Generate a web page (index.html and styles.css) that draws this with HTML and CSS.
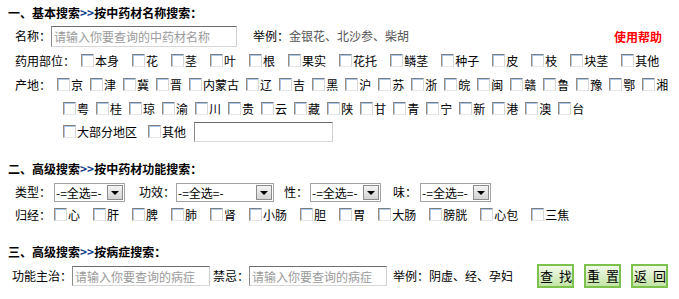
FILE: index.html
```html
<!DOCTYPE html>
<html lang="zh">
<head>
    <meta charset="UTF-8">
    <title>中药材搜索</title>
    <link rel="stylesheet" href="styles.css">
</head>
<body>
    <form class="search-page" action="#">
        <!-- 一、基本搜索 -->
        <h2 class="sec sec-first">一、基本搜索<span class="arr">&gt;&gt;</span>按中药材名称搜索：</h2>
        <div class="row row-name">
            <span class="lbl">名称：</span>
            <input type="text" class="txt txt-name" placeholder="请输入你要查询的中药材名称">
            <span class="eg">举例：<span class="eg-val">金银花、北沙参、柴胡</span></span>
            <a class="help" href="#">使用帮助</a>
        </div>
        <div class="row row-part">
            <span class="lbl">药用部位：</span>
            <div class="opts opts-wide">
                <label class="ck"><input type="checkbox">本身</label>
                <label class="ck"><input type="checkbox">花</label>
                <label class="ck"><input type="checkbox">茎</label>
                <label class="ck"><input type="checkbox">叶</label>
                <label class="ck"><input type="checkbox">根</label>
                <label class="ck"><input type="checkbox">果实</label>
                <label class="ck"><input type="checkbox">花托</label>
                <label class="ck"><input type="checkbox">鳞茎</label>
                <label class="ck"><input type="checkbox">种子</label>
                <label class="ck"><input type="checkbox">皮</label>
                <label class="ck"><input type="checkbox">枝</label>
                <label class="ck"><input type="checkbox">块茎</label>
                <label class="ck"><input type="checkbox">其他</label>
            </div>
        </div>
        <div class="row row-area">
            <span class="lbl">产地：</span>
            <div class="opts opts-tight">
                <label class="ck"><input type="checkbox">京</label>
                <label class="ck"><input type="checkbox">津</label>
                <label class="ck"><input type="checkbox">冀</label>
                <label class="ck"><input type="checkbox">晋</label>
                <label class="ck"><input type="checkbox">内蒙古</label>
                <label class="ck"><input type="checkbox">辽</label>
                <label class="ck"><input type="checkbox">吉</label>
                <label class="ck"><input type="checkbox">黑</label>
                <label class="ck"><input type="checkbox">沪</label>
                <label class="ck"><input type="checkbox">苏</label>
                <label class="ck"><input type="checkbox">浙</label>
                <label class="ck"><input type="checkbox">皖</label>
                <label class="ck"><input type="checkbox">闽</label>
                <label class="ck"><input type="checkbox">赣</label>
                <label class="ck"><input type="checkbox">鲁</label>
                <label class="ck"><input type="checkbox">豫</label>
                <label class="ck"><input type="checkbox">鄂</label>
                <label class="ck"><input type="checkbox">湘</label>
            </div>
        </div>
        <div class="row row-area row-more">
            <div class="opts opts-tight">
                <label class="ck"><input type="checkbox">粤</label>
                <label class="ck"><input type="checkbox">桂</label>
                <label class="ck"><input type="checkbox">琼</label>
                <label class="ck"><input type="checkbox">渝</label>
                <label class="ck"><input type="checkbox">川</label>
                <label class="ck"><input type="checkbox">贵</label>
                <label class="ck"><input type="checkbox">云</label>
                <label class="ck"><input type="checkbox">藏</label>
                <label class="ck"><input type="checkbox">陕</label>
                <label class="ck"><input type="checkbox">甘</label>
                <label class="ck"><input type="checkbox">青</label>
                <label class="ck"><input type="checkbox">宁</label>
                <label class="ck"><input type="checkbox">新</label>
                <label class="ck"><input type="checkbox">港</label>
                <label class="ck"><input type="checkbox">澳</label>
                <label class="ck"><input type="checkbox">台</label>
            </div>
        </div>
        <div class="row row-area row-more row-last">
            <div class="opts">
                <label class="ck ck-big"><input type="checkbox">大部分地区</label>
                <label class="ck ck-other"><input type="checkbox">其他</label>
                <input type="text" class="txt txt-other">
            </div>
        </div>

        <!-- 二、高级搜索 按功能 -->
        <h2 class="sec sec-mid">二、高级搜索<span class="arr">&gt;&gt;</span>按中药材功能搜索：</h2>
        <div class="row row-func">
            <span class="lbl">类型：</span>
            <span class="sel sel-type"><select><option>-=全选=-</option></select><span class="sel-btn"></span></span>
            <span class="lbl lbl-eff">功效：</span>
            <span class="sel sel-eff"><select><option>-=全选=-</option></select><span class="sel-btn"></span></span>
            <span class="lbl lbl-nat">性：</span>
            <span class="sel sel-nat"><select><option>-=全选=-</option></select><span class="sel-btn"></span></span>
            <span class="lbl lbl-taste">味：</span>
            <span class="sel sel-taste"><select><option>-=全选=-</option></select><span class="sel-btn"></span></span>
        </div>
        <div class="row row-mer">
            <span class="lbl">归经：</span>
            <div class="opts opts-wide">
                <label class="ck"><input type="checkbox">心</label>
                <label class="ck"><input type="checkbox">肝</label>
                <label class="ck"><input type="checkbox">脾</label>
                <label class="ck"><input type="checkbox">肺</label>
                <label class="ck"><input type="checkbox">肾</label>
                <label class="ck"><input type="checkbox">小肠</label>
                <label class="ck"><input type="checkbox">胆</label>
                <label class="ck"><input type="checkbox">胃</label>
                <label class="ck"><input type="checkbox">大肠</label>
                <label class="ck"><input type="checkbox">膀胱</label>
                <label class="ck"><input type="checkbox">心包</label>
                <label class="ck"><input type="checkbox">三焦</label>
            </div>
        </div>

        <!-- 三、高级搜索 按病症 -->
        <h2 class="sec sec-mid">三、高级搜索<span class="arr">&gt;&gt;</span>按病症搜索：</h2>
        <div class="row row-ill">
            <span class="lbl">功能主治：</span>
            <input type="text" class="txt txt-ill" placeholder="请输入你要查询的病症">
            <span class="lbl lbl-ban">禁忌：</span>
            <input type="text" class="txt txt-ill" placeholder="请输入你要查询的病症">
            <span class="eg eg-ill">举例：阴虚、经、孕妇</span>
            <div class="btns">
                <button type="submit" class="btn">查 找</button>
                <button type="reset" class="btn">重 置</button>
                <button type="button" class="btn">返 回</button>
            </div>
        </div>
    </form>
</body>
</html>
```

FILE: styles.css
```css
/* 基础样式 */
* {
    margin: 0;
    padding: 0;
    box-sizing: border-box;
}

body {
    font-family: "Noto Sans CJK SC", "Liberation Sans", sans-serif;
    font-size: 12px;
    color: #000;
    background: #fff;
}

.search-page {
    padding: 4px 0 0 8px;
}

/* 标题 */
.sec {
    font-size: 12px;
    font-weight: bold;
    height: 18px;
    line-height: 18px;
}

.sec .arr {
    color: #0d3b8e;
}

.sec-mid {
    margin-top: 17px;
}

/* 行 */
.row {
    display: flex;
    align-items: center;
    height: 24px;
    padding-left: 7px;
    white-space: nowrap;
}

.lbl {
    line-height: 14px;
}

.row-name {
    height: 22px;
    margin-top: 3px;
}

.row-part {
    margin-top: 2px;
}

.row-part .opts {
    margin-left: 6px;
}

.row-area .opts {
    margin-left: 6px;
}

.row-more {
    padding-left: 49px;
}

.row-last {
    height: 22px;
}

.row-func {
    height: 22px;
    margin-top: 3px;
}

.row-mer {
    height: 22px;
    margin-top: 1px;
}

.row-mer .opts {
    margin-left: 3px;
}

.row-ill {
    padding-left: 4px;
    margin-top: 3px;
}

/* 复选框 */
.opts {
    display: flex;
    align-items: center;
}

.ck {
    display: inline-flex;
    align-items: center;
    line-height: 14px;
}

.opts-wide .ck {
    margin-right: 13px;
}

.opts-tight .ck {
    margin-right: 7px;
}

.ck-big {
    margin-right: 11px;
}

.ck-other {
    margin-right: 8px;
}

.ck input {
    appearance: none;
    -webkit-appearance: none;
    width: 13px;
    height: 13px;
    margin: -2px 1px 0 0;
    background: #fff;
    border-top: 1px solid #7e7e7e;
    border-left: 1px solid #a38b74;
    border-right: 1px solid #d8d8d8;
    border-bottom: 1px solid #e6e6e6;
    box-shadow: inset 1px 1px 0 #a9c9ec;
}

/* 文本框 */
.txt {
    font: inherit;
    font-size: 12px;
    height: 21px;
    padding: 0 2px;
    border-top: 1px solid #6e6e6e;
    border-left: 1px solid #8a8a8a;
    border-right: 1px solid #d0d0d0;
    border-bottom: 1px solid #d6d6d6;
    outline: none;
    background: #fff;
}

.txt::placeholder {
    color: #9a9a9a;
}

.txt-name {
    width: 186px;
}

.txt-other {
    width: 139px;
    height: 20px;
}

.txt-ill {
    width: 138px;
    height: 20px;
}

.eg {
    margin-left: 16px;
    line-height: 14px;
}

.eg-val {
    color: #555;
}

.help {
    margin-left: auto;
    margin-right: 17px;
    color: #f00;
    font-weight: bold;
    text-decoration: none;
}

/* 下拉框 */
.sel {
    display: inline-flex;
    align-items: center;
    height: 19px;
    border: 1px solid #a3a3a3;
    background: #fff;
}

.sel select {
    appearance: none;
    -webkit-appearance: none;
    flex: 1;
    min-width: 0;
    height: 100%;
    border: none;
    outline: none;
    background: transparent;
    font: inherit;
    font-size: 12px;
    padding-left: 1px;
}

.sel-btn {
    position: relative;
    width: 16px;
    height: 15px;
    margin-right: 1px;
    border: 1px solid #8c8c8c;
    background: linear-gradient(#f4f4f4, #d2d2d2);
}

.sel-btn::after {
    content: '';
    position: absolute;
    left: 3px;
    top: 5px;
    border-left: 4px solid transparent;
    border-right: 4px solid transparent;
    border-top: 4px solid #000;
}

.sel-type {
    width: 71px;
    margin-left: 3px;
}

.lbl-eff {
    margin-left: 14px;
}

.sel-eff {
    width: 98px;
    margin-left: 1px;
}

.lbl-nat {
    margin-left: 10px;
}

.sel-nat {
    width: 71px;
    margin-left: 2px;
}

.lbl-taste {
    margin-left: 12px;
}

.sel-taste {
    width: 71px;
    margin-left: 3px;
}

/* 病症行 */
.lbl-ban {
    margin-left: 3px;
}

.eg-ill {
    margin-left: 6px;
}

.btns {
    display: flex;
    gap: 10px;
    margin-left: 24px;
}

.btn {
    width: 37px;
    height: 24px;
    padding: 0 0 0 1px;
    text-align: left;
    font-family: inherit;
    font-size: 13px;
    font-weight: normal;
    line-height: 20px;
    word-spacing: 3px;
    color: #000;
    border: 2px solid #7cc24c;
    background: linear-gradient(#f2faea, #c3e4a6);
    cursor: pointer;
}
```
